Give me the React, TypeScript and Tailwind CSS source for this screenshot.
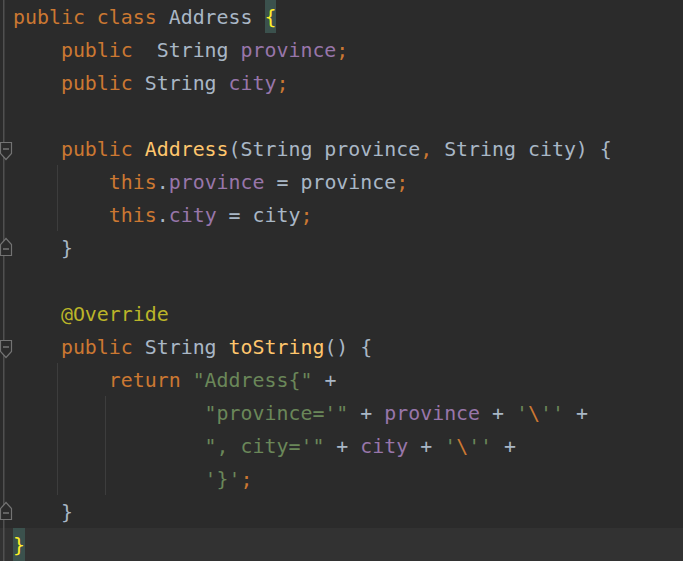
import React from "react";

type Tok = [string, string];

const K = "text-[#cc7832]";
const T = "text-[#a9b7c6]";
const F = "text-[#9876aa]";
const S = "text-[#6a8759]";
const A = "text-[#bbb529]";
const M = "text-[#ffc66d]";
const B = "text-[#ffef28] bg-[#3b514d] inline-block h-[33px] leading-[35px] align-top";

type Line = {
  toks: Tok[];
  marker?: "start" | "end";
  guides?: number;
  current?: boolean;
};

const s4 = "    ";
const s8 = "        ";
const s16 = "                ";

const lines: Line[] = [
  { toks: [[K, "public class "], [T, "Address "], [B, "{"]] },
  { toks: [[T, s4], [K, "public  "], [T, "String "], [F, "province"], [K, ";"]] },
  { toks: [[T, s4], [K, "public "], [T, "String "], [F, "city"], [K, ";"]] },
  { toks: [] },
  {
    marker: "start",
    toks: [[T, s4], [K, "public "], [M, "Address"], [T, "(String province"], [K, ","], [T, " String city) {"]],
  },
  { guides: 1, toks: [[T, s8], [K, "this"], [T, "."], [F, "province"], [T, " = province"], [K, ";"]] },
  { guides: 1, toks: [[T, s8], [K, "this"], [T, "."], [F, "city"], [T, " = city"], [K, ";"]] },
  { marker: "end", toks: [[T, s4 + "}"]] },
  { toks: [] },
  { toks: [[T, s4], [A, "@Override"]] },
  { marker: "start", toks: [[T, s4], [K, "public "], [T, "String "], [M, "toString"], [T, "() {"]] },
  { guides: 1, toks: [[T, s8], [K, "return "], [S, "\"Address{\""], [T, " +"]] },
  {
    guides: 2,
    toks: [[T, s16], [S, "\"province='\""], [T, " + "], [F, "province"], [T, " + "], [S, "'"], [K, "\\"], [S, "''"], [T, " +"]],
  },
  {
    guides: 2,
    toks: [[T, s16], [S, "\", city='\""], [T, " + "], [F, "city"], [T, " + "], [S, "'"], [K, "\\"], [S, "''"], [T, " +"]],
  },
  { guides: 2, toks: [[T, s16], [S, "'}'"], [K, ";"]] },
  { marker: "end", toks: [[T, s4 + "}"]] },
  { current: true, toks: [[B, "}"]] },
];

function Gutter({ marker }: { marker?: "start" | "end" }) {
  return (
    <svg width="13" height="33" viewBox="0 0 13 33" className="shrink-0 block">
      <rect x="3" y="0" width="1.5" height="33" fill="#505050" />
      {marker === "start" && (
        <g>
          <polygon points="0.5,10.5 11.5,10.5 11.5,21.5 6,27.5 0.5,21.5" fill="#2b2b2b" stroke="#737373" strokeWidth="1.2" />
          <line x1="3" y1="17" x2="9" y2="17" stroke="#808080" strokeWidth="1.3" />
        </g>
      )}
      {marker === "end" && (
        <g>
          <polygon points="6,7.5 11.5,13.5 11.5,24.5 0.5,24.5 0.5,13.5" fill="#2b2b2b" stroke="#737373" strokeWidth="1.2" />
          <line x1="3" y1="18" x2="9" y2="18" stroke="#808080" strokeWidth="1.3" />
        </g>
      )}
    </svg>
  );
}

function Row({ line }: { line: Line }) {
  return (
    <div className={`flex h-[33px] ${line.current ? "bg-[#323232]" : ""}`}>
      <Gutter marker={line.marker} />
      <div className="relative flex-1 whitespace-pre leading-[35px] h-[33px]">
        {line.guides && line.guides >= 1 ? (
          <span className="absolute top-0 bottom-0 left-[44px] w-px bg-[#3d3d3d]" />
        ) : null}
        {line.guides && line.guides >= 2 ? (
          <span className="absolute top-0 bottom-0 left-[92px] w-px bg-[#3d3d3d]" />
        ) : null}
        {line.toks.map((t, i) => (
          <span key={i} className={t[0]}>
            {t[1]}
          </span>
        ))}
      </div>
    </div>
  );
}

export default function App() {
  return (
    <div
      className="w-[683px] h-[561px] overflow-hidden bg-[#2b2b2b] text-[19.9px]"
      style={{ fontFamily: '"DejaVu Sans Mono", "Liberation Mono", monospace' }}
    >
      {lines.map((l, i) => (
        <Row key={i} line={l} />
      ))}
    </div>
  );
}
